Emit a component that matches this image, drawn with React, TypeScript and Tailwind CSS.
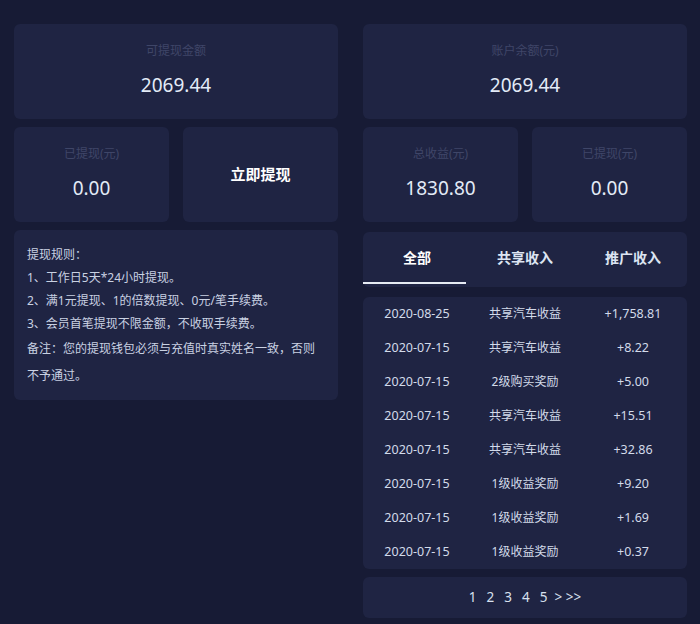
const rows = [
  { date: '2020-08-25', type: '共享汽车收益', amount: '+1,758.81' },
  { date: '2020-07-15', type: '共享汽车收益', amount: '+8.22' },
  { date: '2020-07-15', type: '2级购买奖励', amount: '+5.00' },
  { date: '2020-07-15', type: '共享汽车收益', amount: '+15.51' },
  { date: '2020-07-15', type: '共享汽车收益', amount: '+32.86' },
  { date: '2020-07-15', type: '1级收益奖励', amount: '+9.20' },
  { date: '2020-07-15', type: '1级收益奖励', amount: '+1.69' },
  { date: '2020-07-15', type: '1级收益奖励', amount: '+0.37' },
]

const tabs = ['全部', '共享收入', '推广收入']

function StatCard({ label, value, grow }: { label: string; value: string; grow?: boolean }) {
  return (
    <div
      className={`flex h-[95px] shrink-0 flex-col items-center rounded-md bg-[#1f2443] ${grow ? 'flex-1' : 'w-full'}`}
    >
      <span className="mt-[19px] text-[12px] leading-[16px] text-[#3f4668]">{label}</span>
      <span className="mt-[14px] text-[19px] leading-[24px] text-[#e3ebf7]">{value}</span>
    </div>
  )
}

export default function App() {
  return (
    <div
      className="flex h-[624px] w-[700px] items-start gap-[25px] bg-[#171b35] pl-[14px] pr-[13px] pt-6"
      style={{ fontFamily: '"Noto Sans", "Noto Sans CJK SC", sans-serif' }}
    >
      {/* Left column */}
      <div className="flex w-[324px] flex-col">
        <StatCard label="可提现金额" value="2069.44" />
        <div className="mt-2 flex gap-[14px]">
          <StatCard label="已提现(元)" value="0.00" grow />
          <div className="flex h-[95px] flex-1 items-center justify-center rounded-md bg-[#1f2443]">
            <span className="text-[15px] font-bold text-white">立即提现</span>
          </div>
        </div>

        {/* Rules */}
        <div className="mt-2 h-[170px] rounded-md bg-[#1f2443] px-[13px] pt-[13px] text-[12px] text-[#c9d1e2]">
          <p className="leading-[23px]">提现规则：</p>
          <p className="leading-[23px]">1、工作日5天*24小时提现。</p>
          <p className="leading-[23px]">2、满1元提现、1的倍数提现、0元/笔手续费。</p>
          <p className="leading-[23px]">3、会员首笔提现不限金额，不收取手续费。</p>
          <p className="leading-[27px]">备注：您的提现钱包必须与充值时真实姓名一致，否则不予通过。</p>
        </div>
      </div>

      {/* Right column */}
      <div className="flex w-[324px] flex-col">
        <StatCard label="账户余额(元)" value="2069.44" />
        <div className="mt-2 flex gap-[14px]">
          <StatCard label="总收益(元)" value="1830.80" grow />
          <StatCard label="已提现(元)" value="0.00" grow />
        </div>

        {/* Tabs */}
        <div className="mt-[10px] flex h-[55px] rounded-md bg-[#1f2443]">
          {tabs.map((t, i) => (
            <div key={t} className="relative flex flex-1 items-center justify-center pb-[4px]">
              <span className={`text-[14px] font-bold ${i === 0 ? 'text-white' : 'text-[#dce4f2]'}`}>{t}</span>
              {i === 0 && (
                <div className="absolute bottom-[3px] left-0 h-[2px] w-[103px] bg-[#e6ebf3]" />
              )}
            </div>
          ))}
        </div>

        {/* List */}
        <div className="mt-[10px] flex flex-col rounded-md bg-[#1f2443]">
          {rows.map((r, i) => (
            <div key={i} className="grid h-[34px] grid-cols-3 items-center text-center text-[12.5px] text-[#d3dbea]">
              <span>{r.date}</span>
              <span className="text-[12px]">{r.type}</span>
              <span>{r.amount}</span>
            </div>
          ))}
        </div>

        {/* Pagination */}
        <div className="mt-2 flex h-[41px] items-center justify-center gap-[10px] rounded-md bg-[#1f2443] text-[13.5px] text-[#d8e0ee]">
          <span>1</span>
          <span>2</span>
          <span>3</span>
          <span>4</span>
          <span>5</span>
          <span className="-ml-[3px]">&gt; &gt;&gt;</span>
        </div>
      </div>
    </div>
  )
}
